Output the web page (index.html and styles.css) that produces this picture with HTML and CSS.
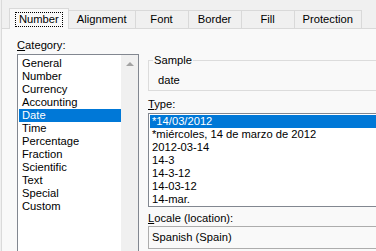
FILE: index.html
```html
<!DOCTYPE html>
<html lang="en">
<head>
  <meta charset="UTF-8">
  <meta name="viewport" content="width=device-width, initial-scale=1.0">
  <title>Format Cells</title>
  <link rel="stylesheet" href="styles.css">
</head>
<body>
  <div class="dialog">
    <div class="tabs">
      <div class="tab tab-active"><span class="focus">Number</span></div>
      <div class="tab">Alignment</div>
      <div class="tab">Font</div>
      <div class="tab">Border</div>
      <div class="tab">Fill</div>
      <div class="tab">Protection</div>
    </div>
    <div class="panel">
      <div class="col-left">
        <div class="label"><u>C</u>ategory:</div>
        <div class="listbox category">
          <ul class="items">
            <li>General</li>
            <li>Number</li>
            <li>Currency</li>
            <li>Accounting</li>
            <li class="selected">Date</li>
            <li>Time</li>
            <li>Percentage</li>
            <li>Fraction</li>
            <li>Scientific</li>
            <li>Text</li>
            <li>Special</li>
            <li>Custom</li>
          </ul>
          <div class="scrollbar"><span class="arrow-up"></span></div>
        </div>
      </div>
      <div class="col-right">
        <fieldset class="sample">
          <legend>Sample</legend>
          <div class="sample-value">date</div>
        </fieldset>
        <div class="label label-type"><u>T</u>ype:</div>
        <ul class="listbox type-list">
          <li class="selected">*14/03/2012</li>
          <li>*miércoles, 14 de marzo de 2012</li>
          <li>2012-03-14</li>
          <li>14-3</li>
          <li>14-3-12</li>
          <li>14-03-12</li>
          <li>14-mar.</li>
        </ul>
        <div class="label label-locale"><u>L</u>ocale (location):</div>
        <div class="combo">Spanish (Spain)</div>
      </div>
    </div>
  </div>
</body>
</html>
```

FILE: styles.css
```css
html, body { margin: 0; overflow: hidden; background: #f0f0f0; }
body { width: 376px; height: 251px; font-family: "Liberation Sans", Arial, sans-serif; font-size: 11.2px; color: #000; }
.dialog { margin-left: 1px; border-left: 1px solid #dadada; width: 460px; height: 251px; }

.tabs { display: flex; align-items: flex-end; height: 28px; padding-left: 7px; box-sizing: border-box; }
.tab { height: 18px; line-height: 17px; min-width: 54px; padding: 0 8px; box-sizing: border-box; text-align: center; border: 1px solid #d9d9d9; border-bottom: 0; margin-right: -1px; background: #f0f0f0; }
.tab-active { position: relative; height: 21px; margin-bottom: -1px; padding: 2px 6px 0; background: #f9f9f9; }
.focus { display: inline-block; line-height: 13px; padding: 0 3px; outline: 1px dotted #000; }

.panel { display: flex; height: 222px; background: #f9f9f9; border-top: 1px solid #d9d9d9; }
.col-left { width: 122px; margin-left: 15px; padding-top: 9px; }
.col-right { flex: 1; margin-left: 9px; padding-top: 24px; }
.label { line-height: 15px; }

.listbox { margin: 1px 0 0; border: 1px solid #828790; background: #fff; list-style: none; }
.listbox li { line-height: 13px; white-space: nowrap; }
.listbox li.selected { background: #0078d7; color: #fff; }

.category { display: flex; height: 200px; }
.items { flex: 1; list-style: none; margin: 0; padding: 2px 0 0 1px; }
.items li { padding-left: 3px; }
.scrollbar { width: 17px; background: #f0f0f0; text-align: center; }
.arrow-up { display: inline-block; margin-top: 7px; width: 0; height: 0; border-left: 4px solid transparent; border-right: 4px solid transparent; border-bottom: 4px solid #a3a3a3; vertical-align: top; }

.sample { margin: 0; padding: 0 0 2px 4px; border: 1px solid #dcdcdc; }
.sample legend { padding: 0 1px; line-height: 14px; }
.sample-value { margin: 6px 0 0 5px; line-height: 15px; }

.label-type { margin-top: 6px; }
.type-list { padding: 1px 1px 0; }
.type-list li { padding-left: 2px; }

.label-locale { margin-top: 4px; }
.combo { margin-top: 0; height: 21px; line-height: 21px; padding-left: 3px; border: 1px solid #adadad; background: #f9f9f9; }
```
